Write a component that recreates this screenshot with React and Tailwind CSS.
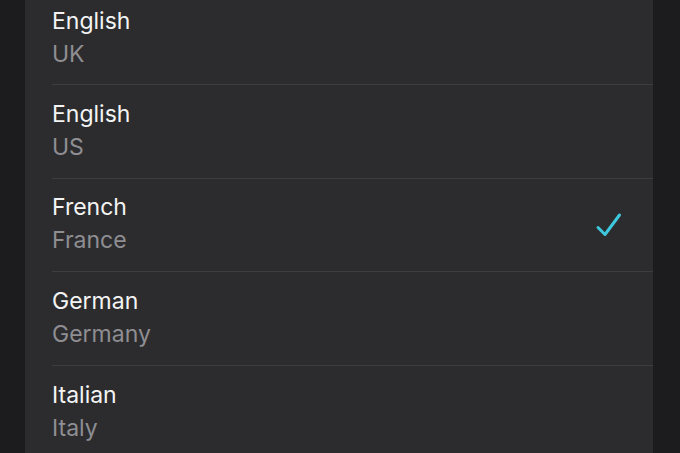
import React from "react";

const items = [
  { title: "English", sub: "UK" },
  { title: "English", sub: "US" },
  { title: "French", sub: "France", checked: true },
  { title: "German", sub: "Germany" },
  { title: "Italian", sub: "Italy" },
];

export default function App() {
  return (
    <div
      className="w-[680px] h-[453px] overflow-hidden bg-[#1c1c1e] flex"
      style={{ fontFamily: "Inter, 'Noto Sans', sans-serif" }}
    >
      <div className="ml-[25px] w-[628px] -mt-[8px] bg-[#2c2c2e] flex flex-col shrink-0">
        {items.map((it, i) => (
          <div
            key={i}
            className={`ml-[27px] h-[93.4px] shrink-0 flex items-center pr-[30px] ${
              i < items.length - 1 ? "border-b border-[#3d3d40]" : ""
            }`}
          >
            <div className="flex-1 flex flex-col -mt-[1px]">
              <div className="text-[23px] leading-[33px] text-[#f4f4f4]">
                {it.title}
              </div>
              <div className="text-[23px] leading-[33px] text-[#8e8e93]">
                {it.sub}
              </div>
            </div>
            {it.checked && (
              <svg width="28" height="28" viewBox="0 0 28 28" fill="none">
                <path
                  d="M3 16.5 L10 23.5 L24.5 4"
                  stroke="#3ec8de"
                  strokeWidth="3"
                  strokeLinecap="round"
                  strokeLinejoin="round"
                />
              </svg>
            )}
          </div>
        ))}
      </div>
    </div>
  );
}
